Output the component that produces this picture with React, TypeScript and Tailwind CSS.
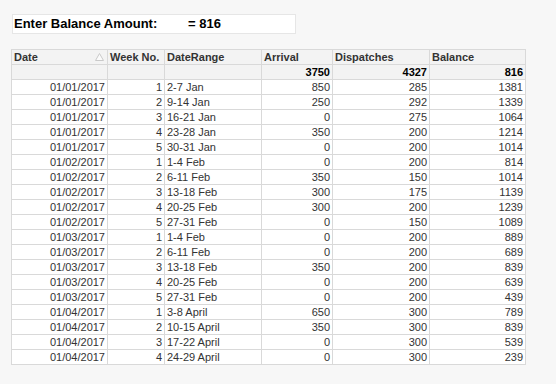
import React from "react";

const rows: [string, string, string, string, string, string][] = [
  ["01/01/2017", "1", "2-7 Jan", "850", "285", "1381"],
  ["01/01/2017", "2", "9-14 Jan", "250", "292", "1339"],
  ["01/01/2017", "3", "16-21 Jan", "0", "275", "1064"],
  ["01/01/2017", "4", "23-28 Jan", "350", "200", "1214"],
  ["01/01/2017", "5", "30-31 Jan", "0", "200", "1014"],
  ["01/02/2017", "1", "1-4 Feb", "0", "200", "814"],
  ["01/02/2017", "2", "6-11 Feb", "350", "150", "1014"],
  ["01/02/2017", "3", "13-18 Feb", "300", "175", "1139"],
  ["01/02/2017", "4", "20-25 Feb", "300", "200", "1239"],
  ["01/02/2017", "5", "27-31 Feb", "0", "150", "1089"],
  ["01/03/2017", "1", "1-4 Feb", "0", "200", "889"],
  ["01/03/2017", "2", "6-11 Feb", "0", "200", "689"],
  ["01/03/2017", "3", "13-18 Feb", "350", "200", "839"],
  ["01/03/2017", "4", "20-25 Feb", "0", "200", "639"],
  ["01/03/2017", "5", "27-31 Feb", "0", "200", "439"],
  ["01/04/2017", "1", "3-8 April", "650", "300", "789"],
  ["01/04/2017", "2", "10-15 April", "350", "300", "839"],
  ["01/04/2017", "3", "17-22 April", "0", "300", "539"],
  ["01/04/2017", "4", "24-29 April", "0", "300", "239"],
];

const cell = "h-[15px] border-r border-b border-[#d9d9d9] leading-[14px] px-[2px] whitespace-nowrap overflow-hidden";

export default function App() {
  return (
    <div
      className="w-[556px] h-[384px] bg-[#f7f7f7] pt-[14px] pl-[11px]"
      style={{ fontFamily: '"Liberation Sans", Arial, sans-serif' }}
    >
      <div className="ml-[1px] w-[284px] h-[20px] bg-white border border-[#e6e6e6] flex items-center pl-[1px] text-[13px] font-bold text-black leading-[18px]">
        <span className="w-[174px]">Enter Balance Amount:</span>
        <span>= 816</span>
      </div>
      <div className="mt-[15px] w-[515px] border-l border-t border-[#d9d9d9] grid grid-cols-[96px_57px_97px_71px_97px_96px] text-[11px] text-[#333]">
        <div className={`${cell} bg-[#f3f3f3] font-bold flex items-center justify-between`}>
          <span>Date</span>
          <svg width="9" height="8" viewBox="0 0 9 8" className="mr-[1px]">
            <path d="M4.5 0.5 L8.5 7.5 L0.5 7.5 Z" fill="#fbfbfb" stroke="#c9c9c9" strokeWidth="1" />
          </svg>
        </div>
        <div className={`${cell} bg-[#f3f3f3] font-bold`}>Week No.</div>
        <div className={`${cell} bg-[#f3f3f3] font-bold`}>DateRange</div>
        <div className={`${cell} bg-[#f3f3f3] font-bold`}>Arrival</div>
        <div className={`${cell} bg-[#f3f3f3] font-bold`}>Dispatches</div>
        <div className={`${cell} bg-[#f3f3f3] font-bold`}>Balance</div>

        <div className={`${cell} bg-[#f3f3f3]`}></div>
        <div className={`${cell} bg-[#f3f3f3]`}></div>
        <div className={`${cell} bg-[#f3f3f3]`}></div>
        <div className={`${cell} bg-[#f3f3f3] font-bold text-right text-black`}>3750</div>
        <div className={`${cell} bg-[#f3f3f3] font-bold text-right text-black`}>4327</div>
        <div className={`${cell} bg-[#f3f3f3] font-bold text-right text-black`}>816</div>

        {rows.map((r, i) => (
          <React.Fragment key={i}>
            <div className={`${cell} bg-white text-right`}>{r[0]}</div>
            <div className={`${cell} bg-white text-right`}>{r[1]}</div>
            <div className={`${cell} bg-white`}>{r[2]}</div>
            <div className={`${cell} bg-white text-right`}>{r[3]}</div>
            <div className={`${cell} bg-white text-right`}>{r[4]}</div>
            <div className={`${cell} bg-white text-right`}>{r[5]}</div>
          </React.Fragment>
        ))}
      </div>
    </div>
  );
}
